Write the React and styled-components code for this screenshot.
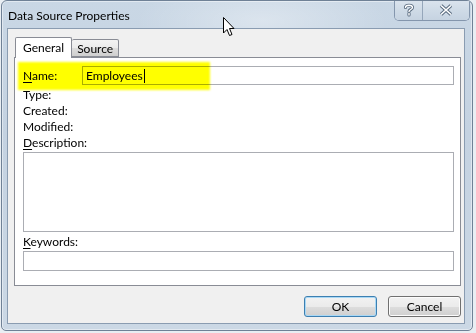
import React from 'react';
import styled, { createGlobalStyle } from 'styled-components';

const GlobalStyle = createGlobalStyle`
  html, body {
    margin: 0;
    padding: 0;
    background: #e9eef3;
  }
  body {
    font-family: Lato, "Noto Sans", sans-serif;
    font-size: 12px;
    color: #000;
  }
`;

const Window = styled.div`
  position: relative;
  box-sizing: border-box;
  width: 472px;
  height: 331px;
  margin-left: 1px;
  border: 1px solid #6f8196;
  border-radius: 6px 6px 5px 5px;
  background:
    radial-gradient(ellipse 180px 60px at 260px 20px, rgba(255, 255, 255, 0.35), rgba(255, 255, 255, 0) 70%),
    linear-gradient(180deg, #c9d7e5 0%, #c4d2e1 40%, #cbd8e5 100%);
  box-shadow: inset 0 0 0 1px rgba(255, 255, 255, 0.45);
  display: flex;
  flex-direction: column;
  overflow: hidden;
`;

const TitleBar = styled.div`
  height: 27px;
  display: flex;
  align-items: flex-start;
  padding-left: 6px;
`;

const Title = styled.div`
  margin-top: 7px;
  font-size: 12px;
  color: #000;
  white-space: nowrap;
`;

const CaptionGroup = styled.div`
  margin-left: auto;
  margin-right: 2px;
  margin-top: -1px;
  display: flex;
  height: 20px;
  border: 1px solid #8496ad;
  border-top: none;
  border-radius: 0 0 5px 5px;
  overflow: hidden;
  box-shadow: inset 0 0 0 1px rgba(255, 255, 255, 0.5);
`;

const CaptionButton = styled.div`
  width: ${p => p.$w}px;
  display: flex;
  align-items: center;
  justify-content: center;
  background: linear-gradient(180deg, #dbe4ee 0%, #cfdbe7 50%, #c6d3e1 100%);
  & + & {
    border-left: 1px solid #95a6ba;
  }
`;

const Client = styled.div`
  box-sizing: border-box;
  margin: 0 7px 6px 5px;
  height: 296px;
  border: 1px solid #8a9cb1;
  background: #f0f0f0;
  padding: 8px 3px 6px 6px;
  display: flex;
  flex-direction: column;
`;

const TabRow = styled.div`
  display: flex;
  align-items: flex-end;
  height: 20px;
  padding-left: 1px;
  position: relative;
  z-index: 1;
`;

const Tab = styled.div`
  box-sizing: border-box;
  height: ${p => (p.$active ? 21 : 18)}px;
  margin-bottom: ${p => (p.$active ? -1 : 0)}px;
  padding: 0 ${p => (p.$active ? 7 : 5)}px;
  border: 1px solid #898c95;
  border-bottom: ${p => (p.$active ? 'none' : '1px solid #898c95')};
  border-left: ${p => (p.$first ? '1px solid #898c95' : 'none')};
  border-radius: 2px 2px 0 0;
  background: ${p => (p.$active ? '#ffffff' : 'linear-gradient(180deg, #f3f3f3 0%, #ebebeb 50%, #dddddd 51%, #cfcfcf 100%)')};
  display: flex;
  align-items: center;
  line-height: 16px;
  padding-top: ${p => (p.$active ? 0 : 1)}px;
`;

const Panel = styled.div`
  box-sizing: border-box;
  height: 229px;
  flex: none;
  border: 1px solid #898c95;
  background: #ffffff;
  padding: 8px 6px 14px 8px;
  display: flex;
  flex-direction: column;
`;

const NameRow = styled.div`
  position: relative;
  display: flex;
  align-items: center;
  height: 19px;
  margin-bottom: 2px;
`;

const Highlight = styled.div`
  position: absolute;
  left: -5px;
  top: -4px;
  width: 192px;
  height: 28px;
  background: #ffff00;
  mix-blend-mode: multiply;
  filter: blur(1.2px);
  pointer-events: none;
`;

const Label = styled.div`
  line-height: 16px;
  height: 16px;
  flex: none;
  width: ${p => (p.$w ? `${p.$w}px` : 'auto')};
  margin-top: ${p => p.$mt || 0}px;
`;

const Key = styled.span`
  text-decoration: underline;
  text-underline-offset: 2px;
`;

const TextBox = styled.div`
  box-sizing: border-box;
  flex: ${p => (p.$grow ? '1 1 auto' : 'none')};
  height: ${p => p.$h}px;
  margin-top: ${p => p.$mt || 0}px;
  border: 1px solid #abadb3;
  background: #ffffff;
  display: flex;
  align-items: center;
  padding-left: 3px;
  line-height: 16px;
`;

const Caret = styled.span`
  display: inline-block;
  width: 1px;
  height: 14px;
  background: #000;
  margin-left: 1px;
`;

const ButtonRow = styled.div`
  margin-top: 10px;
  display: flex;
  justify-content: flex-end;
  gap: 11px;
`;

const Button = styled.div`
  box-sizing: border-box;
  width: 73px;
  height: 21px;
  border: 1px solid ${p => (p.$default ? '#3c7fb1' : '#707070')};
  border-radius: 3px;
  background: linear-gradient(180deg, #f2f2f2 0%, #ebebeb 50%, #dddddd 51%, #cfcfcf 100%);
  box-shadow: ${p => (p.$default ? 'inset 0 0 0 1px #a9d8f5' : 'inset 0 0 0 1px #fcfcfc')};
  display: flex;
  align-items: center;
  justify-content: center;
  line-height: 16px;
`;

const Cursor = styled.svg`
  position: absolute;
  left: 220px;
  top: 15px;
  pointer-events: none;
`;

function HelpGlyph() {
  const d = 'M2.5 4.5 C2.5 1.5 9.5 1.5 9.5 4.5 C9.5 6.5 6 6.5 6 8.5 M6 10.5 L6 12';
  return (
    <svg width="12" height="14" viewBox="0 0 12 14">
      <path d={d} fill="none" stroke="#5a6c80" strokeWidth="3.2" strokeLinecap="round" />
      <path d={d} fill="none" stroke="#ffffff" strokeWidth="1.4" strokeLinecap="round" />
    </svg>
  );
}

function CloseGlyph() {
  const d = 'M2 1.5 L12 10.5 M12 1.5 L2 10.5';
  return (
    <svg width="14" height="12" viewBox="0 0 14 12">
      <path d={d} fill="none" stroke="#5a6c80" strokeWidth="3.6" />
      <path d={d} fill="none" stroke="#ffffff" strokeWidth="1.6" />
    </svg>
  );
}

export default function App() {
  return (
    <>
      <GlobalStyle />
      <Window>
        <TitleBar>
          <Title>Data Source Properties</Title>
          <CaptionGroup>
            <CaptionButton $w={27}>
              <HelpGlyph />
            </CaptionButton>
            <CaptionButton $w={46}>
              <CloseGlyph />
            </CaptionButton>
          </CaptionGroup>
        </TitleBar>
        <Client>
          <TabRow>
            <Tab $active $first>General</Tab>
            <Tab>Source</Tab>
          </TabRow>
          <Panel>
            <NameRow>
              <Label $w={59}>
                <Key>N</Key>ame:
              </Label>
              <TextBox $h={19} $grow>
                Employees
                <Caret />
              </TextBox>
              <Highlight />
            </NameRow>
            <Label>Type:</Label>
            <Label>Created:</Label>
            <Label>Modified:</Label>
            <Label>
              <Key>D</Key>escription:
            </Label>
            <TextBox $h={80} $mt={1} />
            <Label $mt={2}>
              <Key>K</Key>eywords:
            </Label>
            <TextBox $h={20} $mt={1} />
          </Panel>
          <ButtonRow>
            <Button $default>OK</Button>
            <Button>Cancel</Button>
          </ButtonRow>
        </Client>
        <Cursor width="13" height="21" viewBox="0 0 13 21">
          <path
            d="M1.5 1.5 L1.5 17 L5 13.5 L7.5 19.5 L10 18.5 L7.5 12.5 L12 12.5 Z"
            fill="#ffffff"
            stroke="#000000"
            strokeWidth="1"
          />
        </Cursor>
      </Window>
    </>
  );
}
